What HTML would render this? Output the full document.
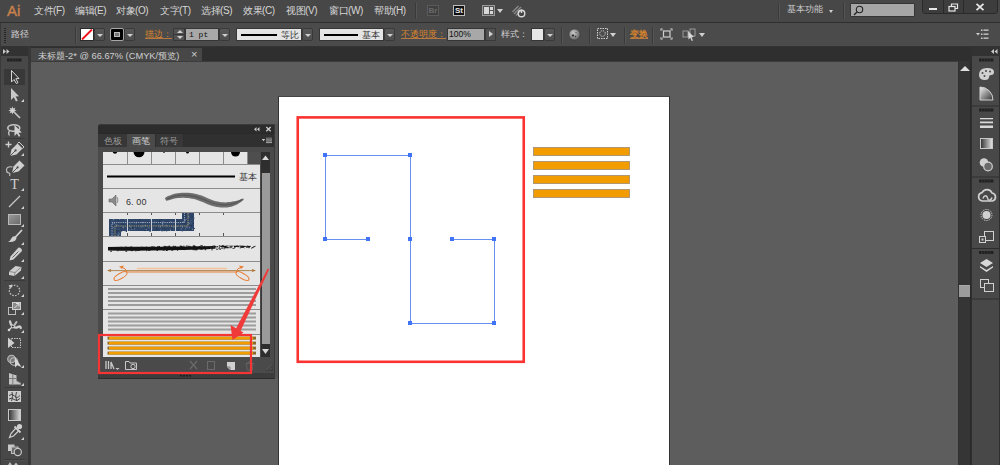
<!DOCTYPE html>
<html><head><meta charset="utf-8">
<style>
*{margin:0;padding:0;box-sizing:border-box}
html,body{width:1000px;height:465px;overflow:hidden;background:#5d5d5d;font-family:"Liberation Sans",sans-serif;}
.a{position:absolute}
#menubar{left:0;top:0;width:1000px;height:22px;background:#474747}
#menuline{left:0;top:22px;width:1000px;height:1px;background:#2e2e2e}
#ctrl{left:0;top:23px;width:1000px;height:23px;background:#4b4b4b}
#ctrlline{left:0;top:46px;width:1000px;height:1px;background:#333}
.mi{position:absolute;top:4px;font-size:10px;letter-spacing:-0.45px;color:#d6d6d6;white-space:nowrap;line-height:14px}
#tbhead{left:1px;top:47px;width:28px;height:9px;background:#323232}
#toolbar{left:1px;top:56px;width:28px;height:409px;background:#484848}
#tbstrip{left:28px;top:47px;width:3px;height:418px;background:#383838}
#tabbar{left:31px;top:47px;width:940px;height:14px;background:#2f2f2f}
#tab{left:31px;top:48px;width:171px;height:13px;background:#474747}
#canvas{left:31px;top:61px;width:927px;height:404px;background:#5d5d5d}
#vscroll{left:958px;top:61px;width:14px;height:404px;background:#353535;border-left:1px solid #303030;border-right:2px solid #2a2a2a}
#dockhead{left:971px;top:47px;width:29px;height:9px;background:#323232}
#dock{left:972px;top:56px;width:28px;height:409px;background:#484848;border-right:1px solid #2e2e2e}
#artboard{left:278px;top:96px;width:392px;height:380px;background:#fff;border:1px solid #333;border-top-color:#444}

.sep{position:absolute;width:1px;background:#3a3a3a;box-shadow:1px 0 0 #555}
.dd{position:absolute;width:11px;height:13px;background:linear-gradient(#585858,#4e4e4e);border:1px solid #393939;border-radius:2px}
.dd:after{content:"";position:absolute;left:2px;top:5px;border-left:3px solid transparent;border-right:3px solid transparent;border-top:3px solid #cfcfcf}
.lbl{position:absolute;font-size:9px;line-height:12px;white-space:nowrap}
.org{color:#d9852c;text-decoration:underline;text-decoration-color:#b87a40;text-underline-offset:1px}
</style></head><body>
<div class="a" id="menubar"></div>
<div class="a" id="menuline"></div>
<div class="a" id="ctrl"></div><div class="a" style="left:0;top:23px;width:1px;height:442px;background:#3a3a3a"></div>
<div class="a" id="ctrlline"></div>
<div class="a" id="tbhead"></div>
<div class="a" id="toolbar"></div>
<div class="a" id="tbstrip"></div>
<div class="a" id="tabbar"></div>
<div class="a" id="tab"></div>
<div class="a" id="canvas"></div><div class="a" style="left:31px;top:61px;width:927px;height:1px;background:#3c3c3c"></div>
<div class="a" id="vscroll"></div>
<div class="a" id="dockhead"></div>
<div class="a" id="dock"></div>
<div class="a" id="artboard"></div>

<!-- MENU BAR -->
<div class="a" style="left:7px;top:2px;font-size:15px;font-weight:normal;color:#c8804d;-webkit-text-stroke:0.4px #c8804d;line-height:18px;letter-spacing:0px">Ai</div>
<div class="mi" style="left:34px">文件(F)</div>
<div class="mi" style="left:75px">编辑(E)</div>
<div class="mi" style="left:116px">对象(O)</div>
<div class="mi" style="left:160px">文字(T)</div>
<div class="mi" style="left:201px">选择(S)</div>
<div class="mi" style="left:243px">效果(C)</div>
<div class="mi" style="left:286px">视图(V)</div>
<div class="mi" style="left:329px">窗口(W)</div>
<div class="mi" style="left:374px">帮助(H)</div>

<!-- MENU RIGHT -->
<div class="sep" style="left:415px;top:3px;height:16px"></div>
<div class="a" style="left:427px;top:5px;width:12px;height:11px;border:1px solid #5a5a5a;background:#404040;color:#6a6a6a;font-size:8px;line-height:9px;text-align:center;font-weight:bold">Br</div>
<div class="a" style="left:453px;top:5px;width:12px;height:11px;border:1px solid #bdbdbd;background:#111;color:#e8e8e8;font-size:8px;line-height:9px;text-align:center;font-weight:bold">St</div>
<div class="a" style="left:482px;top:5px;width:13px;height:11px;border:1px solid #9a9a9a;background:#555"><div class="a" style="left:1px;top:1px;width:5px;height:7px;background:#d8d8d8"></div><div class="a" style="left:7px;top:1px;width:3px;height:3px;background:#d8d8d8"></div><div class="a" style="left:7px;top:5px;width:3px;height:3px;background:#d8d8d8"></div></div>
<div class="a" style="left:497px;top:9px;border-left:3px solid transparent;border-right:3px solid transparent;border-top:4px solid #d0d0d0"></div>
<svg class="a" style="left:511px;top:4px" width="16" height="14" viewBox="0 0 16 14"><path d="M1.5 8 L7.5 2 M3 10 L10 3 M5 11.5 L10.5 6" stroke="#8a8a8a" stroke-width="1.4"/><circle cx="10.5" cy="9.5" r="3.3" fill="none" stroke="#d8d8d8" stroke-width="1.4"/><path d="M10.5 5.5 V9" stroke="#d8d8d8" stroke-width="1.4"/></svg>
<div class="sep" style="left:778px;top:3px;height:16px"></div>
<div class="lbl" style="left:787px;top:3px;color:#cfcfcf">基本功能</div>
<div class="a" style="left:829px;top:10px;border-left:2px solid transparent;border-right:2px solid transparent;border-top:3px solid #cfcfcf"></div>
<div class="sep" style="left:843px;top:3px;height:16px"></div>
<div class="a" style="left:850px;top:3px;width:65px;height:14px;background:#a6a6a6;border:1px solid #353535;border-radius:1px"></div>
<svg class="a" style="left:853px;top:5px" width="11" height="11" viewBox="0 0 11 11"><circle cx="6.5" cy="4.5" r="3.2" fill="none" stroke="#222" stroke-width="1.1"/><path d="M4.2 6.8 L1 10" stroke="#222" stroke-width="1.3"/></svg>
<div class="a" style="left:922px;top:-2px;width:76px;height:16px;background:#3d3d3d;border:1px solid #2a2a2a;border-radius:0 0 3px 3px;box-shadow:inset 0 1px 0 #4a4a4a"></div>
<div class="a" style="left:943px;top:0;width:1px;height:13px;background:#2a2a2a"></div>
<div class="a" style="left:963px;top:0;width:1px;height:13px;background:#2a2a2a"></div>
<div class="a" style="left:929px;top:8px;width:8px;height:2px;background:#e6e6e6"></div>
<svg class="a" style="left:948px;top:3px" width="11" height="9" viewBox="0 0 11 9"><rect x="1" y="3.5" width="6" height="4.5" fill="none" stroke="#e6e6e6" stroke-width="1.2"/><path d="M3.5 3.5 V1 H9.5 V5.5 H7" fill="none" stroke="#e6e6e6" stroke-width="1.2"/></svg>
<svg class="a" style="left:975px;top:3px" width="10" height="8" viewBox="0 0 10 8"><path d="M1.5 0.8 L8.5 7.2 M8.5 0.8 L1.5 7.2" stroke="#e6e6e6" stroke-width="1.8"/></svg>

<!-- CONTROL BAR -->
<div class="a" style="left:4px;top:28px;width:2px;height:15px;background:repeating-linear-gradient(#262626 0 1px,transparent 1px 2px)"></div>
<div class="lbl" style="left:11px;top:28px;color:#d6d6d6;font-size:9px;line-height:12px">路径</div>
<div class="sep" style="left:75px;top:27px;height:17px"></div>
<div class="a" style="left:80px;top:28px;width:14px;height:13px;background:#fff;border:1px solid #2a2a2a;overflow:hidden"><svg width="12" height="11" style="position:absolute;left:0;top:0"><path d="M1 10.5 L11 0.5" stroke="#f0101a" stroke-width="1.9"/></svg></div>
<div class="dd" style="left:94px;top:28px"></div>
<div class="a" style="left:110px;top:28px;width:14px;height:13px;background:#000;border:1px solid #a8a8a8;border-radius:2px"><div class="a" style="left:3px;top:3px;width:6px;height:5px;border:1px solid #bbb;background:#777"></div></div>
<div class="dd" style="left:124px;top:28px"></div>
<div class="lbl org" style="left:145px;top:28px">描边：</div>
<div class="a" style="left:173px;top:28px;width:12px;height:13px;background:#525252;border:1px solid #393939"><div class="a" style="left:3px;top:1px;border-left:3px solid transparent;border-right:3px solid transparent;border-bottom:3px solid #cfcfcf"></div><div class="a" style="left:0;top:5px;width:10px;height:1px;background:#363636"></div><div class="a" style="left:3px;top:7px;border-left:3px solid transparent;border-right:3px solid transparent;border-top:3px solid #cfcfcf"></div></div>
<div class="a" style="left:185px;top:28px;width:34px;height:13px;background:#a8a8a8;border:1px solid #363636;color:#111;font-family:'Liberation Mono',monospace;font-size:8px;line-height:11px;padding-left:3px;white-space:pre">1 pt</div>
<div class="dd" style="left:219px;top:28px"></div>
<div class="a" style="left:236px;top:28px;width:66px;height:13px;background:#e4e4e4;border:1px solid #363636"><div class="a" style="left:4px;top:5px;width:36px;height:2px;background:#000"></div><div class="lbl" style="left:44px;top:0px;color:#333">等比</div></div>
<div class="dd" style="left:302px;top:28px"></div>
<div class="a" style="left:319px;top:28px;width:65px;height:13px;background:#e4e4e4;border:1px solid #363636"><div class="a" style="left:4px;top:5px;width:34px;height:2px;background:#000"></div><div class="lbl" style="left:42px;top:0px;color:#333">基本</div></div>
<div class="dd" style="left:384px;top:28px"></div>
<div class="lbl org" style="left:401px;top:28px">不透明度：</div>
<div class="a" style="left:447px;top:28px;width:38px;height:13px;background:#a8a8a8;border:1px solid #363636;color:#111;font-size:8.5px;line-height:11px;padding-left:1px">100%</div>
<div class="a" style="left:485px;top:28px;width:11px;height:13px;background:#525252;border:1px solid #393939"><div class="a" style="left:3px;top:2px;border-top:3px solid transparent;border-bottom:3px solid transparent;border-left:4px solid #cfcfcf"></div></div>
<div class="lbl" style="left:501px;top:28px;color:#cfcfcf">样式：</div>
<div class="a" style="left:531px;top:28px;width:13px;height:13px;background:#e6e6e6;border:1px solid #363636"></div>
<div class="dd" style="left:544px;top:28px"></div>
<div class="sep" style="left:561px;top:27px;height:17px"></div>
<svg class="a" style="left:568px;top:28px" width="13" height="13" viewBox="0 0 13 13"><defs><radialGradient id="gg" cx="0.4" cy="0.35" r="0.75"><stop offset="0" stop-color="#c8c8c8"/><stop offset="1" stop-color="#5a5a5a"/></radialGradient></defs><circle cx="6.5" cy="6.5" r="5.5" fill="url(#gg)" stroke="#3a3a3a" stroke-width="0.6"/><circle cx="5" cy="7.5" r="1.1" fill="#222"/><circle cx="7.5" cy="8.5" r="0.7" fill="#333"/><circle cx="8" cy="4.5" r="0.6" fill="#444"/></svg>
<div class="sep" style="left:589px;top:27px;height:17px"></div>
<svg class="a" style="left:597px;top:28px" width="12" height="12" viewBox="0 0 12 12"><rect x="0.5" y="0.5" width="10" height="10" fill="none" stroke="#d0d0d0" stroke-dasharray="1.5 1"/><circle cx="5.5" cy="5.5" r="2.8" fill="none" stroke="#d0d0d0" stroke-dasharray="1.2 1"/></svg>
<div class="a" style="left:610px;top:33px;border-left:3px solid transparent;border-right:3px solid transparent;border-top:4px solid #d0d0d0"></div>
<div class="sep" style="left:624px;top:27px;height:17px"></div>
<div class="lbl org" style="left:630px;top:28px;-webkit-text-stroke:0.3px #d9852c">变换</div>
<div class="sep" style="left:652px;top:27px;height:17px"></div>
<svg class="a" style="left:660px;top:28px" width="13" height="12" viewBox="0 0 13 12"><rect x="3.5" y="3" width="6.5" height="6" fill="#4b4b4b" stroke="#d0d0d0" stroke-width="1.2"/><path d="M0.5 0.5 h2.2 v0.9 h-1.3 v1.3 h-0.9 Z M12.5 0.5 h-2.2 v0.9 h1.3 v1.3 h0.9 Z M0.5 11.5 h2.2 v-0.9 h-1.3 v-1.3 h-0.9 Z M12.5 11.5 h-2.2 v-0.9 h1.3 v-1.3 h0.9 Z" fill="#d8d8d8"/><path d="M1.5 1.5 L3.5 3 M11.5 1.5 L10 3 M1.5 10.5 L3.5 9 M11.5 10.5 L10 9" stroke="#999" stroke-width="0.8"/></svg>
<svg class="a" style="left:682px;top:28px" width="15" height="13" viewBox="0 0 15 13"><rect x="1" y="3" width="5" height="6" fill="none" stroke="#9a9a9a" stroke-width="1"/><rect x="8" y="1" width="5" height="7" fill="none" stroke="#9a9a9a" stroke-width="1"/><path d="M6 3 L12 9 L9.5 9.2 L11 12.5 L9.8 13 L8.3 9.8 L6.5 11.5 Z" fill="#d8d8d8"/></svg>
<div class="a" style="left:699px;top:33px;border-left:3px solid transparent;border-right:3px solid transparent;border-top:4px solid #d0d0d0"></div>
<svg class="a" style="left:976px;top:29px" width="13" height="11" viewBox="0 0 13 11"><path d="M0 4 L4 4 L2 6.5 Z" fill="#d0d0d0"/><rect x="5" y="0.5" width="1.5" height="1.5" fill="#d0d0d0"/><rect x="5" y="4.5" width="1.5" height="1.5" fill="#d0d0d0"/><rect x="5" y="8.5" width="1.5" height="1.5" fill="#d0d0d0"/><rect x="7.5" y="0.5" width="5" height="1.3" fill="#d0d0d0"/><rect x="7.5" y="4.5" width="5" height="1.3" fill="#d0d0d0"/><rect x="7.5" y="8.5" width="5" height="1.3" fill="#d0d0d0"/></svg>

<!-- TAB -->
<div class="lbl" style="left:38px;top:48px;color:#cfcfcf;font-size:9.3px;line-height:13px;padding-top:2px">未标题-2* @ 66.67% (CMYK/预览)</div>
<div class="a" style="left:191px;top:49px;color:#cfcfcf;font-size:11px;line-height:11px">×</div>

<!-- TOOLBAR -->
<svg class="a" style="left:0;top:0" width="31" height="465" viewBox="0 0 31 465">
<path d="M3 49 L6 51.5 L3 54 Z M6.5 49 L9.5 51.5 L6.5 54 Z" fill="#c8c8c8"/>
<rect x="7" y="58.5" width="14.5" height="3" fill="#222"/><g fill="#3a3a3a"><rect x="9.5" y="58.5" width="0.6" height="3"/><rect x="12.2" y="58.5" width="0.6" height="3"/><rect x="14.9" y="58.5" width="0.6" height="3"/><rect x="17.6" y="58.5" width="0.6" height="3"/></g>
<rect x="4" y="69" width="21" height="16" fill="#383838"/>
<path d="M11.5 70.5 L11.5 82 L14 79.5 L16.3 83.5 L18 82.6 L15.8 78.7 L19 78.5 Z" fill="none" stroke="#d6d6d6" stroke-width="1"/>
<path d="M11 88 L11 100 L13.8 97.3 L16 101.5 L17.8 100.6 L15.6 96.4 L19 96.2 Z" fill="#c8c8c8"/>
<path d="M21 102 L24 102 L24 99 Z" fill="#d0d0d0"/>
<path d="M12.50 106.20 L13.23 108.74 L15.54 107.46 L14.26 109.77 L16.80 110.50 L14.26 111.23 L15.54 113.54 L13.23 112.26 L12.50 114.80 L11.77 112.26 L9.46 113.54 L10.74 111.23 L8.20 110.50 L10.74 109.77 L9.46 107.46 L11.77 108.74 Z" fill="#cfcfcf"/><circle cx="12.5" cy="110.5" r="2.3" fill="#cfcfcf"/>
<path d="M14.5 112.5 L20 118" stroke="#c4c4c4" stroke-width="1.7"/>
<ellipse cx="13.8" cy="128" rx="6" ry="3.3" fill="none" stroke="#c4c4c4" stroke-width="1.6"/>
<path d="M10 130.5 q-2.5 2 -0.5 5" fill="none" stroke="#c4c4c4" stroke-width="1.3"/>
<path d="M14.5 125 L14.5 136 L17 133.5 L18.8 136.8 L20.3 136 L18.6 132.8 L21.8 132.5 Z" fill="#d2d2d2"/>
<rect x="4" y="138" width="21" height="1" fill="#3a3a3a"/>
<path d="M8.5 141.5 V147.5 M5.5 144.5 H11.5" stroke="#d0d0d0" stroke-width="1.3"/>
<path d="M10 156 L11.5 149.5 L17.5 143.5 L22.5 148.5 L16.5 154.5 Z" fill="#cfcfcf"/>
<path d="M17.5 143.5 L19 142 L24 147 L22.5 148.5" fill="none" stroke="#cfcfcf" stroke-width="1"/>
<path d="M10 156 L15 151" stroke="#484848" stroke-width="0.9"/>
<circle cx="15.6" cy="150.4" r="1.1" fill="#484848"/>
<path d="M21 156 L24 156 L24 153 Z" fill="#d0d0d0"/>
<path d="M12 173 L13.5 166.5 L19.5 160.5 L24.5 165.5 L18.5 171.5 Z" fill="#cfcfcf"/>
<path d="M12 173 L17 168" stroke="#484848" stroke-width="0.9"/>
<circle cx="17.6" cy="167.4" r="1.1" fill="#484848"/>
<path d="M12.5 167 q-6 -1 -6 3 q0 3 2.5 3 q1.5 0 0.5 3" fill="none" stroke="#c4c4c4" stroke-width="1.1"/>
<text x="14.5" y="188.5" font-family="Liberation Serif" font-size="14" fill="#d0d0d0" text-anchor="middle">T</text>
<path d="M21 191 L24 191 L24 188 Z" fill="#d0d0d0"/>
<path d="M9 207 L20 196" stroke="#c8c8c8" stroke-width="1.2"/>
<path d="M21 209 L24 209 L24 206 Z" fill="#d0d0d0"/>
<defs><linearGradient id="rg" x1="0" y1="0" x2="1" y2="1"><stop offset="0" stop-color="#9a9a9a"/><stop offset="1" stop-color="#6a6a6a"/></linearGradient>
<linearGradient id="gr2" x1="0" y1="0" x2="1" y2="0"><stop offset="0" stop-color="#303030"/><stop offset="1" stop-color="#dcdcdc"/></linearGradient></defs>
<rect x="8.5" y="214.5" width="12" height="10" fill="url(#rg)" stroke="#b8b8b8" stroke-width="1"/>
<path d="M21 227 L24 227 L24 224 Z" fill="#d0d0d0"/>
<path d="M21.5 230.5 L15.5 237" stroke="#cfcfcf" stroke-width="1.8" stroke-linecap="round"/>
<path d="M15.8 236.5 q1.5 1.5 -0.5 4 q-2.5 2 -7.5 1.5 q2.5 -1 3.5 -3.5 q1.5 -3 4.5 -2 Z" fill="#cfcfcf"/>
<path d="M21 245 L24 245 L24 242 Z" fill="#d0d0d0"/>
<path d="M18.5 247.5 q3.5 0 3.5 3.5 L13.5 259.5 L9.5 260.5 L10.5 256.5 Z" fill="#cfcfcf"/>
<path d="M18.5 251.5 L12.5 257.5" stroke="#6a6a6a" stroke-width="1"/>
<path d="M21 262 L24 262 L24 259 Z" fill="#d0d0d0"/>
<path d="M9 271.5 L15.5 266 L21.5 267 L21 270.5 L14.5 276 L9 275 Z" fill="#cfcfcf"/>
<path d="M9 271.5 L15 272.5 L21.5 267" fill="none" stroke="#777" stroke-width="0.8"/>
<path d="M15 272.5 L14.5 276" stroke="#777" stroke-width="0.8"/>
<path d="M21 279 L24 279 L24 276 Z" fill="#d0d0d0"/>
<rect x="4" y="280" width="21" height="1" fill="#3a3a3a"/>
<circle cx="14.5" cy="290.5" r="5.2" fill="none" stroke="#bdbdbd" stroke-width="1.3" stroke-dasharray="1.6 1.3"/>
<path d="M8.5 285.5 L12.5 284.5 L11 288.5 Z" fill="#d0d0d0"/>
<path d="M21 297 L24 297 L24 294 Z" fill="#d0d0d0"/>
<rect x="8.5" y="307.5" width="7" height="7" fill="none" stroke="#bdbdbd" stroke-width="1"/>
<rect x="12.5" y="302.5" width="8" height="7" fill="#8a8a8a" stroke="#cfcfcf" stroke-width="1"/>
<path d="M14.5 308 L19 303.5 M16 303.5 H19 V306.5" fill="none" stroke="#e0e0e0" stroke-width="1"/>
<path d="M21 315 L24 315 L24 312 Z" fill="#d0d0d0"/>
<path d="M10 321.5 q0.5 3.5 3 5 q3 2 5.5 0.2 q1.5 -1 2.3 1.3" fill="none" stroke="#cfcfcf" stroke-width="2.3" stroke-linecap="round"/>
<path d="M16.5 322 L14.5 325" stroke="#bdbdbd" stroke-width="2" stroke-linecap="round"/>
<path d="M9 330 L12 327" stroke="#cfcfcf" stroke-width="1.3"/>
<circle cx="9" cy="330" r="1.3" fill="#d8d8d8"/>
<circle cx="12.8" cy="326.5" r="1.4" fill="#333" stroke="#e0e0e0" stroke-width="0.9"/>
<path d="M21 333 L24 333 L24 330 Z" fill="#d0d0d0"/>
<rect x="11.5" y="338.5" width="9" height="9" fill="none" stroke="#c8c8c8" stroke-dasharray="1.5 1"/>
<path d="M8 337.5 L8 348 L14.5 343 Z" fill="#cfcfcf"/>
<circle cx="11.5" cy="359" r="3.8" fill="#7a7a7a" stroke="#bdbdbd" stroke-width="1.1"/>
<circle cx="14" cy="361.5" r="3.8" fill="none" stroke="#bdbdbd" stroke-width="1.1"/>
<path d="M15 357 L15 367.5 L17.3 365.3 L21.5 367 Z" fill="#d8d8d8"/>
<path d="M21 368 L24 368 L24 365 Z" fill="#d0d0d0"/>
<path d="M9 372.5 L16.5 374.8 L16.5 380.5 L21 383 L21 384.5 L9 384.5 Z" fill="#c4c4c4"/>
<path d="M9 372.5 L16.5 374.8" stroke="#2a2a2a" stroke-width="0.8"/>
<path d="M12.8 373.5 V384 M9 378.5 H16.5" stroke="#6a6a6a" stroke-width="0.8"/>
<path d="M16.5 381 L21 383.5" stroke="#6a6a6a" stroke-width="0.6"/>
<path d="M21 386 L24 386 L24 383 Z" fill="#d0d0d0"/>
<rect x="4" y="387" width="21" height="1" fill="#3a3a3a"/>
<rect x="8.5" y="391.5" width="12" height="10" fill="#c8c8c8" stroke="#d0d0d0"/>
<path d="M9 395.5 q3 -2.5 5.5 0.5 q2.5 3 5.5 -0.5 M9 399 q3 -2 5 0.5 q3 2.5 6 -1 M12 392 q1.5 4 -0.5 9 M16.5 392 q-2 4 0.5 9" fill="none" stroke="#3a3a3a" stroke-width="0.9"/>
<rect x="8.5" y="409.5" width="12" height="11" fill="url(#gr2)" stroke="#c8c8c8"/>
<path d="M16 428 L11 433.5 L9.5 437.5 L13.5 436 L19 430.5" fill="none" stroke="#cfcfcf" stroke-width="1.2"/>
<path d="M14.5 426.5 L20.5 432.5" stroke="#cfcfcf" stroke-width="1.8"/>
<circle cx="19.5" cy="426.5" r="2.6" fill="#cfcfcf"/>
<path d="M21 440 L24 440 L24 437 Z" fill="#d0d0d0"/>
<rect x="8" y="444.5" width="6.5" height="6.5" fill="#c8c8c8"/>
<rect x="11.5" y="447" width="6.5" height="6.5" fill="#6a6a6a" stroke="#bdbdbd" stroke-width="1"/>
<circle cx="17.8" cy="452" r="3.6" fill="#4a4a4a" stroke="#c4c4c4" stroke-width="1.2"/>
<rect x="4" y="459" width="21" height="1" fill="#3a3a3a"/><rect x="4" y="460" width="21" height="1" fill="#525252"/>
<path d="M8 465 L10 462 L12 465 Z M14 465 L16 462.5 L18 465 Z" fill="#bbbbbb"/>
</svg>

<!-- SCROLLBAR -->
<div class="a" style="left:965px;top:66px;border-left:5px solid transparent;border-right:5px solid transparent;border-bottom:5px solid #e0e0e0;left:960px"></div>
<div class="a" style="left:959px;top:285px;width:11px;height:12px;background:#9c9c9c;border-top:1px solid #a8a8a8"></div>

<!-- DOCK -->
<div class="a" style="left:971px;top:56px;width:1px;height:409px;background:#2e2e2e"></div>
<svg class="a" style="left:971px;top:47px" width="29" height="418" viewBox="971 47 29 418">
<path d="M994 49 L991 51.5 L994 54 Z M997.5 49 L994.5 51.5 L997.5 54 Z" fill="#c8c8c8"/>
<rect x="979" y="58.5" width="14.5" height="3" fill="#222"/><g fill="#3a3a3a"><rect x="981.5" y="58.5" width="0.6" height="3"/><rect x="984.2" y="58.5" width="0.6" height="3"/><rect x="986.9" y="58.5" width="0.6" height="3"/><rect x="989.6" y="58.5" width="0.6" height="3"/></g>
<path d="M979 75 q0 -7 8 -7 q7 0 7 4 q0 3 -3 3 q-2 0 -2 2 q0 3 -4 3 q-6 0 -6 -5 Z" fill="#d0d0d0"/>
<circle cx="982.5" cy="73" r="1" fill="#4b4b4b"/><circle cx="986" cy="71" r="1" fill="#4b4b4b"/><circle cx="990" cy="71.5" r="1" fill="#4b4b4b"/><circle cx="984.5" cy="76" r="1" fill="#4b4b4b"/>
<defs><linearGradient id="cg" x1="0" y1="0" x2="1" y2="1"><stop offset="0" stop-color="#f0f0f0"/><stop offset="1" stop-color="#303030"/></linearGradient></defs>
<path d="M980 87 A13 13 0 0 1 993 100 L980 100 Z" fill="url(#cg)" stroke="#d0d0d0" stroke-width="1"/>
<rect x="972" y="105.5" width="28" height="1" fill="#2e2e2e"/>
<rect x="979" y="108.5" width="14.5" height="3" fill="#222"/><g fill="#3a3a3a"><rect x="981.5" y="108.5" width="0.6" height="3"/><rect x="984.2" y="108.5" width="0.6" height="3"/><rect x="986.9" y="108.5" width="0.6" height="3"/><rect x="989.6" y="108.5" width="0.6" height="3"/></g>
<rect x="980" y="118" width="13" height="1.3" fill="#d8d8d8"/><rect x="980" y="121.5" width="13" height="1.8" fill="#d8d8d8"/><rect x="980" y="125.5" width="13" height="2.5" fill="#d8d8d8"/>
<defs><linearGradient id="dg" x1="0" y1="0" x2="1" y2="0"><stop offset="0" stop-color="#303030"/><stop offset="1" stop-color="#e8e8e8"/></linearGradient></defs>
<rect x="980.5" y="138.5" width="12" height="10" fill="url(#dg)" stroke="#c8c8c8"/>
<circle cx="984" cy="162.5" r="4.3" fill="#d0d0d0"/>
<circle cx="988" cy="166.5" r="4.3" fill="#6a6a6a" stroke="#d0d0d0" stroke-width="1.2"/>
<rect x="972" y="176.5" width="28" height="1" fill="#2e2e2e"/>
<rect x="979" y="179.5" width="14.5" height="3" fill="#222"/><g fill="#3a3a3a"><rect x="981.5" y="179.5" width="0.6" height="3"/><rect x="984.2" y="179.5" width="0.6" height="3"/><rect x="986.9" y="179.5" width="0.6" height="3"/><rect x="989.6" y="179.5" width="0.6" height="3"/></g>
<path d="M982.5 201 a4.2 4.2 0 0 1 -0.5 -8.3 a5.5 5.5 0 0 1 10 0.3 a4.1 4.1 0 0 1 0.5 8 Z" fill="none" stroke="#d0d0d0" stroke-width="1.7"/>
<path d="M983 198.5 c1 -3.5 4 -3.5 4.5 -0.5 c0.5 3 3.5 3 4.5 -0.5" fill="none" stroke="#d0d0d0" stroke-width="1.5"/>
<circle cx="986.5" cy="215" r="5.5" fill="none" stroke="#c8c8c8" stroke-dasharray="1.4 1"/>
<circle cx="986.5" cy="215" r="4" fill="#d0d0d0"/>
<rect x="984.5" y="231.5" width="9" height="9" fill="none" stroke="#d0d0d0"/>
<rect x="979.5" y="236.5" width="6" height="6" fill="#4b4b4b" stroke="#d0d0d0"/>
<rect x="981.5" y="238.5" width="2" height="2" fill="#d0d0d0"/>
<rect x="972" y="248" width="28" height="1" fill="#2e2e2e"/>
<rect x="979" y="251.0" width="14.5" height="3" fill="#222"/><g fill="#3a3a3a"><rect x="981.5" y="251.0" width="0.6" height="3"/><rect x="984.2" y="251.0" width="0.6" height="3"/><rect x="986.9" y="251.0" width="0.6" height="3"/><rect x="989.6" y="251.0" width="0.6" height="3"/></g>
<path d="M986.5 259 L993 263 L986.5 267 L980 263 Z" fill="#d8d8d8"/>
<path d="M980 266 L986.5 270 L993 266 L993 267.5 L986.5 272 L980 267.5 Z" fill="#d8d8d8"/>
<rect x="980.5" y="279.5" width="8" height="8" fill="none" stroke="#d0d0d0"/>
<rect x="984.5" y="283.5" width="9" height="8" fill="#4b4b4b" stroke="#d0d0d0"/>
<rect x="972" y="298.5" width="28" height="1" fill="#2e2e2e"/>
</svg>

<!-- ARTWORK -->
<svg class="a" style="left:0;top:0" width="1000" height="465" viewBox="0 0 1000 465">
<rect x="297.75" y="117.4" width="226" height="244.4" fill="none" stroke="#fb3232" stroke-width="2.6"/>
<path d="M368 239.5 H325.5 V155.5 H410.5 V323.5 H494.5 V239.5 H452" fill="none" stroke="#6890f0" stroke-width="1"/>
<rect x="323" y="153" width="4" height="4" fill="#4173f7"/><rect x="408" y="153" width="4" height="4" fill="#4173f7"/><rect x="323" y="237" width="4" height="4" fill="#4173f7"/><rect x="366" y="237" width="4" height="4" fill="#4173f7"/><rect x="408" y="237" width="4" height="4" fill="#4173f7"/><rect x="450" y="237" width="4" height="4" fill="#4173f7"/><rect x="492" y="237" width="4" height="4" fill="#4173f7"/><rect x="408" y="321" width="4" height="4" fill="#4173f7"/><rect x="492" y="321" width="4" height="4" fill="#4173f7"/>
<rect x="533.5" y="147.5" width="96" height="8" fill="#f39c00" stroke="#a89274" stroke-width="0.9"/><rect x="533.5" y="161.5" width="96" height="8" fill="#f39c00" stroke="#a89274" stroke-width="0.9"/><rect x="533.5" y="175.5" width="96" height="8" fill="#f39c00" stroke="#a89274" stroke-width="0.9"/><rect x="533.5" y="189.5" width="96" height="8" fill="#f39c00" stroke="#a89274" stroke-width="0.9"/>
</svg>

<!-- BRUSH PANEL -->
<div class="a" style="left:98px;top:124px;width:177px;height:254px;background:#4a4a4a;border-radius:3px 3px 0 0"></div>
<div class="a" style="left:98px;top:124px;width:177px;height:10px;background:#2c2c2c;border-radius:3px 3px 0 0;border-top:1px solid #3a3a3a"></div>
<div class="a" style="left:98px;top:134px;width:177px;height:13px;background:#303030"></div><div class="a" style="left:98px;top:133px;width:177px;height:1px;background:#292929"></div>
<div class="a" style="left:98px;top:134px;width:29px;height:13px;background:#373737"></div>
<div class="a" style="left:127px;top:134px;width:28px;height:13px;background:#4a4a4a"></div>
<div class="a" style="left:155px;top:134px;width:29px;height:13px;background:#373737;border-left:1px solid #2e2e2e;border-right:1px solid #2e2e2e"></div>
<div class="lbl" style="left:104px;top:135px;color:#9a9a9a">色板</div>
<div class="lbl" style="left:132px;top:135px;color:#d8d8d8">画笔</div>
<div class="lbl" style="left:160px;top:135px;color:#9a9a9a">符号</div>
<div class="a" style="left:98px;top:147px;width:177px;height:226px;background:#4a4a4a"></div><div class="a" style="left:274px;top:124px;width:1px;height:254px;background:#383838"></div><div class="a" style="left:275px;top:124px;width:3px;height:254px;background:#555"></div>
<div class="a" style="left:103px;top:152px;width:157px;height:205px;background:#e5e5e5"></div>
<div class="a" style="left:261px;top:152px;width:9px;height:205px;background:#383838"></div>
<div class="a" style="left:262px;top:173px;width:8px;height:171px;background:#9a9a9a"></div>
<div class="a" style="left:98px;top:373px;width:177px;height:6px;background:#3c3c3c;border-bottom:1px solid #2c2c2c"></div>
<svg class="a" style="left:0;top:0" width="300" height="400" viewBox="0 0 300 400">
<path d="M256.5 127 L254 129.2 L256.5 131.4 Z M259.5 127 L257 129.2 L259.5 131.4 Z" fill="#c8c8c8"/>
<path d="M266.3 127 L270.7 131.3 M270.7 127 L266.3 131.3" stroke="#d0d0d0" stroke-width="1.2"/>
<path d="M261.8 139 L265.2 139 L263.5 141.3 Z" fill="#d0d0d0"/>
<rect x="266" y="137.5" width="6" height="5.5" fill="#6a6a6a"/><rect x="266" y="139.6" width="6" height="0.9" fill="#888"/><rect x="266" y="142.2" width="6" height="0.9" fill="#aaa"/>
<rect x="248" y="152" width="12" height="12" fill="#4e4e4e"/>
<rect x="127" y="152" width="1" height="12" fill="#8c8c8c"/><rect x="151" y="152" width="1" height="12" fill="#8c8c8c"/><rect x="175" y="152" width="1" height="12" fill="#8c8c8c"/><rect x="199" y="152" width="1" height="12" fill="#8c8c8c"/><rect x="223" y="152" width="1" height="12" fill="#8c8c8c"/><rect x="247" y="152" width="1" height="12" fill="#8c8c8c"/>
<g clip-path="url(#c1)"><circle cx="115" cy="151.5" r="2.3" fill="#000"/>
<circle cx="139" cy="151.8" r="5.5" fill="#000"/>
<circle cx="164" cy="152" r="1" fill="#333"/>
<circle cx="235.5" cy="152" r="4.5" fill="#000"/><circle cx="187.5" cy="152" r="1.5" fill="#000"/></g><defs><clipPath id="c1"><rect x="103" y="152" width="157" height="12"/></clipPath></defs>
<rect x="103" y="164" width="157" height="1" fill="#8c8c8c"/><rect x="103" y="188" width="157" height="1" fill="#8c8c8c"/><rect x="103" y="212" width="157" height="1" fill="#8c8c8c"/><rect x="103" y="236" width="157" height="1" fill="#8c8c8c"/><rect x="103" y="261" width="157" height="1" fill="#8c8c8c"/><rect x="103" y="285" width="157" height="1" fill="#8c8c8c"/><rect x="103" y="309" width="157" height="1" fill="#8c8c8c"/><rect x="103" y="334" width="157" height="1" fill="#8c8c8c"/>
<rect x="107" y="175.5" width="128" height="2" fill="#000"/><text x="239" y="180" font-family="Liberation Sans" font-size="9" fill="#333">基本</text>
<path d="M109 199 h3 l4 -4 v11 l-4 -4 h-3 Z" fill="#8a8a8a" stroke="#666" stroke-width="0.6"/>
<path d="M117 197 q2 3 0 6" fill="none" stroke="#777" stroke-width="0.8"/>
<text x="126" y="204.5" font-family="Liberation Sans" font-size="9" fill="#333" letter-spacing="0.1">6. 00</text>
<defs><filter id="bl" x="-10%" y="-50%" width="120%" height="200%"><feGaussianBlur stdDeviation="0.7"/></filter></defs><path d="M166.2 200.8 L167.9 200.4 L169.5 199.9 L171.2 199.4 L172.9 198.9 L174.7 198.6 L176.4 198.3 L178.3 198.1 L180.1 197.9 L182.0 197.8 L183.9 197.8 L185.9 197.9 L187.8 198.1 L189.8 198.3 L191.8 198.7 L193.8 199.1 L195.8 199.6 L197.8 200.2 L199.8 200.9 L201.8 201.7 L203.9 202.6 L203.8 202.5 L205.9 203.5 L208.1 204.5 L210.3 205.3 L212.5 206.0 L214.7 206.5 L216.8 207.0 L218.9 207.3 L221.1 207.5 L223.2 207.6 L225.3 207.5 L227.3 207.4 L229.4 207.1 L231.4 206.7 L233.4 206.1 L235.2 205.3 L237.1 204.4 L238.9 203.3 L240.6 202.2 L242.3 201.0 L243.9 199.6 L243.1 198.4 L241.2 199.1 L239.4 199.9 L237.6 200.5 L235.8 201.0 L234.0 201.3 L232.2 201.6 L230.4 201.9 L228.7 202.1 L226.9 202.3 L225.1 202.4 L223.3 202.3 L221.5 202.2 L219.7 201.9 L217.8 201.6 L216.0 201.2 L214.1 200.7 L212.1 200.0 L210.2 199.3 L208.2 198.4 L206.2 197.5 L206.1 197.4 L204.0 196.5 L201.7 195.6 L199.5 194.9 L197.2 194.3 L195.0 193.7 L192.7 193.3 L190.5 193.0 L188.3 192.8 L186.1 192.7 L183.9 192.7 L181.8 192.8 L179.7 193.0 L177.6 193.2 L175.6 193.6 L173.6 194.1 L171.7 194.7 L169.8 195.4 L168.0 196.1 L166.3 197.0 L164.8 198.2 Z" fill="#6e6e6e" filter="url(#bl)"/><path d="M167 199.3 C176 194, 191 193.5, 205 200 S232 206.5, 242 199.5" fill="none" stroke="#4a4a4a" stroke-width="1.3" opacity="0.6" filter="url(#bl)"/>
<rect x="127" y="213" width="1" height="2" fill="#555"/><rect x="127" y="233" width="1" height="3" fill="#555"/><rect x="151" y="213" width="1" height="2" fill="#555"/><rect x="151" y="233" width="1" height="3" fill="#555"/><rect x="175" y="213" width="1" height="2" fill="#555"/><rect x="175" y="233" width="1" height="3" fill="#555"/><rect x="199" y="213" width="1" height="2" fill="#555"/><rect x="199" y="233" width="1" height="3" fill="#555"/><rect x="223" y="213" width="1" height="2" fill="#555"/><rect x="223" y="233" width="1" height="3" fill="#555"/>
<rect x="109" y="219" width="12" height="17" fill="#2f4668"/>
<rect x="109" y="219" width="85" height="12" fill="#2f4668"/>
<rect x="182" y="213" width="12" height="18" fill="#2f4668"/>
<rect x="129.2" y="225.5" width="1" height="1" fill="#8696ad"/><rect x="186.9" y="223.9" width="1" height="1" fill="#54698a"/><rect x="149.5" y="227.7" width="1" height="1" fill="#1d2f4a"/><rect x="187.7" y="222.0" width="1" height="1" fill="#6a7f9c"/><rect x="173.4" y="226.6" width="1" height="1" fill="#8696ad"/><rect x="131.9" y="226.7" width="1" height="1" fill="#20324f"/><rect x="183.7" y="215.2" width="1" height="1" fill="#1d2f4a"/><rect x="166.1" y="230.9" width="1" height="1" fill="#8696ad"/><rect x="157.8" y="225.3" width="1" height="1" fill="#20324f"/><rect x="185.9" y="226.1" width="1" height="1" fill="#1d2f4a"/><rect x="150.0" y="227.7" width="1" height="1" fill="#20324f"/><rect x="116.5" y="231.4" width="1" height="1" fill="#20324f"/><rect x="185.3" y="213.5" width="1" height="1" fill="#20324f"/><rect x="112.8" y="227.1" width="1" height="1" fill="#6a7f9c"/><rect x="141.1" y="226.5" width="1" height="1" fill="#54698a"/><rect x="125.8" y="222.4" width="1" height="1" fill="#54698a"/><rect x="131.4" y="228.9" width="1" height="1" fill="#8696ad"/><rect x="185.2" y="221.7" width="1" height="1" fill="#20324f"/><rect x="182.9" y="221.9" width="1" height="1" fill="#54698a"/><rect x="132.1" y="227.6" width="1" height="1" fill="#1d2f4a"/><rect x="188.6" y="223.1" width="1" height="1" fill="#8696ad"/><rect x="153.3" y="225.6" width="1" height="1" fill="#6a7f9c"/><rect x="135.8" y="221.7" width="1" height="1" fill="#54698a"/><rect x="162.3" y="223.7" width="1" height="1" fill="#8696ad"/><rect x="160.8" y="219.4" width="1" height="1" fill="#20324f"/><rect x="130.3" y="223.5" width="1" height="1" fill="#54698a"/><rect x="124.7" y="230.4" width="1" height="1" fill="#54698a"/><rect x="117.9" y="231.7" width="1" height="1" fill="#54698a"/><rect x="151.5" y="228.0" width="1" height="1" fill="#8696ad"/><rect x="146.0" y="229.1" width="1" height="1" fill="#6a7f9c"/><rect x="115.8" y="230.1" width="1" height="1" fill="#1d2f4a"/><rect x="184.2" y="223.4" width="1" height="1" fill="#1d2f4a"/><rect x="190.4" y="220.2" width="1" height="1" fill="#54698a"/><rect x="124.6" y="219.4" width="1" height="1" fill="#6a7f9c"/><rect x="177.5" y="220.9" width="1" height="1" fill="#1d2f4a"/><rect x="144.8" y="224.9" width="1" height="1" fill="#8696ad"/><rect x="148.5" y="227.6" width="1" height="1" fill="#8696ad"/><rect x="144.7" y="222.4" width="1" height="1" fill="#20324f"/><rect x="192.9" y="223.0" width="1" height="1" fill="#1d2f4a"/><rect x="111.7" y="223.5" width="1" height="1" fill="#54698a"/><rect x="190.9" y="225.5" width="1" height="1" fill="#1d2f4a"/><rect x="191.5" y="215.8" width="1" height="1" fill="#1d2f4a"/><rect x="112.8" y="233.8" width="1" height="1" fill="#54698a"/><rect x="185.5" y="226.3" width="1" height="1" fill="#6a7f9c"/><rect x="110.7" y="225.4" width="1" height="1" fill="#6a7f9c"/><rect x="188.8" y="227.1" width="1" height="1" fill="#8696ad"/><rect x="119.7" y="235.4" width="1" height="1" fill="#54698a"/><rect x="149.6" y="231.0" width="1" height="1" fill="#8696ad"/><rect x="184.4" y="215.7" width="1" height="1" fill="#1d2f4a"/><rect x="109.6" y="227.5" width="1" height="1" fill="#20324f"/><rect x="113.2" y="219.2" width="1" height="1" fill="#8696ad"/><rect x="161.5" y="225.0" width="1" height="1" fill="#6a7f9c"/><rect x="149.2" y="230.9" width="1" height="1" fill="#6a7f9c"/><rect x="181.8" y="230.8" width="1" height="1" fill="#6a7f9c"/><rect x="116.3" y="224.5" width="1" height="1" fill="#8696ad"/><rect x="141.8" y="222.0" width="1" height="1" fill="#8696ad"/><rect x="156.2" y="229.5" width="1" height="1" fill="#20324f"/><rect x="176.6" y="226.0" width="1" height="1" fill="#6a7f9c"/><rect x="140.7" y="226.9" width="1" height="1" fill="#54698a"/><rect x="161.9" y="222.9" width="1" height="1" fill="#8696ad"/><rect x="162.3" y="230.5" width="1" height="1" fill="#8696ad"/><rect x="144.7" y="229.0" width="1" height="1" fill="#20324f"/><rect x="132.0" y="226.6" width="1" height="1" fill="#20324f"/><rect x="111.4" y="220.5" width="1" height="1" fill="#54698a"/><rect x="176.2" y="219.0" width="1" height="1" fill="#20324f"/><rect x="154.1" y="221.7" width="1" height="1" fill="#6a7f9c"/><rect x="171.4" y="226.0" width="1" height="1" fill="#6a7f9c"/><rect x="178.0" y="229.5" width="1" height="1" fill="#20324f"/><rect x="121.2" y="230.8" width="1" height="1" fill="#6a7f9c"/><rect x="153.8" y="226.0" width="1" height="1" fill="#20324f"/><rect x="180.7" y="228.5" width="1" height="1" fill="#8696ad"/><rect x="112.1" y="230.7" width="1" height="1" fill="#54698a"/><rect x="156.0" y="225.7" width="1" height="1" fill="#54698a"/><rect x="193.9" y="227.9" width="1" height="1" fill="#20324f"/><rect x="161.4" y="230.3" width="1" height="1" fill="#20324f"/><rect x="130.5" y="226.8" width="1" height="1" fill="#8696ad"/><rect x="191.2" y="222.6" width="1" height="1" fill="#54698a"/><rect x="173.3" y="228.5" width="1" height="1" fill="#54698a"/><rect x="122.8" y="224.5" width="1" height="1" fill="#20324f"/><rect x="186.9" y="224.9" width="1" height="1" fill="#20324f"/><rect x="120.6" y="230.3" width="1" height="1" fill="#1d2f4a"/><rect x="158.8" y="220.2" width="1" height="1" fill="#1d2f4a"/><rect x="181.4" y="225.4" width="1" height="1" fill="#8696ad"/><rect x="159.6" y="226.4" width="1" height="1" fill="#8696ad"/><rect x="184.6" y="220.1" width="1" height="1" fill="#8696ad"/><rect x="149.8" y="221.8" width="1" height="1" fill="#1d2f4a"/><rect x="144.6" y="229.0" width="1" height="1" fill="#54698a"/><rect x="126.5" y="226.4" width="1" height="1" fill="#54698a"/><rect x="111.4" y="235.8" width="1" height="1" fill="#6a7f9c"/><rect x="181.8" y="222.2" width="1" height="1" fill="#6a7f9c"/><rect x="129.0" y="229.5" width="1" height="1" fill="#6a7f9c"/><rect x="185.5" y="218.9" width="1" height="1" fill="#6a7f9c"/><rect x="135.6" y="222.7" width="1" height="1" fill="#6a7f9c"/><rect x="119.0" y="219.1" width="1" height="1" fill="#8696ad"/><rect x="112.1" y="223.4" width="1" height="1" fill="#8696ad"/><rect x="109.6" y="220.7" width="1" height="1" fill="#20324f"/><rect x="163.8" y="230.1" width="1" height="1" fill="#20324f"/><rect x="142.2" y="225.5" width="1" height="1" fill="#6a7f9c"/><rect x="184.1" y="214.8" width="1" height="1" fill="#20324f"/><rect x="118.6" y="233.4" width="1" height="1" fill="#8696ad"/><rect x="117.2" y="234.6" width="1" height="1" fill="#8696ad"/><rect x="166.7" y="221.5" width="1" height="1" fill="#20324f"/><rect x="134.1" y="228.5" width="1" height="1" fill="#8696ad"/><rect x="118.1" y="234.7" width="1" height="1" fill="#8696ad"/><rect x="166.2" y="225.3" width="1" height="1" fill="#6a7f9c"/><rect x="165.7" y="224.7" width="1" height="1" fill="#6a7f9c"/><rect x="170.0" y="228.6" width="1" height="1" fill="#54698a"/><rect x="172.1" y="227.9" width="1" height="1" fill="#1d2f4a"/><rect x="188.2" y="216.3" width="1" height="1" fill="#8696ad"/><rect x="163.8" y="227.9" width="1" height="1" fill="#20324f"/><rect x="156.2" y="227.9" width="1" height="1" fill="#20324f"/><rect x="150.0" y="231.0" width="1" height="1" fill="#6a7f9c"/><rect x="156.1" y="226.2" width="1" height="1" fill="#20324f"/><rect x="139.5" y="219.1" width="1" height="1" fill="#20324f"/><rect x="149.7" y="219.2" width="1" height="1" fill="#54698a"/><rect x="139.1" y="220.7" width="1" height="1" fill="#20324f"/><rect x="114.9" y="224.5" width="1" height="1" fill="#6a7f9c"/><rect x="121.9" y="226.6" width="1" height="1" fill="#6a7f9c"/><rect x="118.5" y="229.1" width="1" height="1" fill="#54698a"/><rect x="144.4" y="230.1" width="1" height="1" fill="#1d2f4a"/><rect x="153.8" y="226.1" width="1" height="1" fill="#1d2f4a"/><rect x="182.8" y="221.5" width="1" height="1" fill="#8696ad"/><rect x="111.6" y="231.5" width="1" height="1" fill="#20324f"/><rect x="189.7" y="221.8" width="1" height="1" fill="#54698a"/><rect x="186.0" y="220.1" width="1" height="1" fill="#20324f"/><rect x="192.0" y="228.8" width="1" height="1" fill="#8696ad"/><rect x="185.1" y="228.4" width="1" height="1" fill="#6a7f9c"/><rect x="160.1" y="229.7" width="1" height="1" fill="#6a7f9c"/><rect x="118.1" y="230.4" width="1" height="1" fill="#1d2f4a"/><rect x="150.8" y="225.0" width="1" height="1" fill="#20324f"/><rect x="125.9" y="231.0" width="1" height="1" fill="#1d2f4a"/><rect x="112.2" y="224.5" width="1" height="1" fill="#20324f"/><rect x="118.5" y="219.5" width="1" height="1" fill="#1d2f4a"/><rect x="120.5" y="231.2" width="1" height="1" fill="#54698a"/><rect x="187.5" y="213.6" width="1" height="1" fill="#54698a"/><rect x="182.0" y="226.8" width="1" height="1" fill="#6a7f9c"/><rect x="169.9" y="230.0" width="1" height="1" fill="#8696ad"/><rect x="193.8" y="217.7" width="1" height="1" fill="#6a7f9c"/><rect x="182.2" y="223.1" width="1" height="1" fill="#1d2f4a"/><rect x="151.3" y="229.1" width="1" height="1" fill="#54698a"/><rect x="147.9" y="228.9" width="1" height="1" fill="#20324f"/><rect x="170.2" y="221.4" width="1" height="1" fill="#8696ad"/><rect x="147.1" y="221.3" width="1" height="1" fill="#20324f"/><rect x="121.2" y="223.6" width="1" height="1" fill="#1d2f4a"/><rect x="158.7" y="224.6" width="1" height="1" fill="#6a7f9c"/><rect x="120.8" y="227.0" width="1" height="1" fill="#20324f"/><rect x="110.9" y="223.3" width="1" height="1" fill="#20324f"/><rect x="111.8" y="229.4" width="1" height="1" fill="#1d2f4a"/><rect x="143.3" y="222.1" width="1" height="1" fill="#6a7f9c"/><rect x="129.5" y="221.9" width="1" height="1" fill="#1d2f4a"/><rect x="123.0" y="227.3" width="1" height="1" fill="#8696ad"/><rect x="186.6" y="226.7" width="1" height="1" fill="#8696ad"/><rect x="162.5" y="220.9" width="1" height="1" fill="#6a7f9c"/><rect x="113.8" y="223.0" width="1" height="1" fill="#6a7f9c"/><rect x="127" y="219" width="1" height="12" fill="#c8d0dc"/><rect x="151" y="219" width="1" height="12" fill="#c8d0dc"/><rect x="175" y="219" width="1" height="12" fill="#c8d0dc"/>
<path d="M115 236 V226 H188 V213" fill="none" stroke="#c9b46a" stroke-width="0.8" stroke-dasharray="1.2 1"/>
<path d="M112 236 V222.5 H184.5 V213" fill="none" stroke="#b8c4d8" stroke-width="0.8" stroke-dasharray="1.2 1"/>
<path d="M108 247 C140 246.5, 180 247, 215 246 C230 245.5, 240 245.5, 250 246 L250 247.5 C235 248, 220 248.5, 200 249.5 C170 250.5, 140 251, 108 250.5 Z" fill="#111"/><rect x="145.9" y="246.6" width="0.9" height="1" fill="#1a1a1a"/><rect x="204.1" y="245.8" width="0.9" height="1" fill="#1a1a1a"/><rect x="167.4" y="246.6" width="1.5" height="1" fill="#1a1a1a"/><rect x="136.2" y="249.6" width="1.8" height="1" fill="#1a1a1a"/><rect x="218.9" y="245.3" width="1.5" height="1" fill="#1a1a1a"/><rect x="222.2" y="245.3" width="1.0" height="1" fill="#1a1a1a"/><rect x="157.0" y="246.3" width="1.8" height="1" fill="#1a1a1a"/><rect x="187.8" y="245.8" width="1.9" height="1" fill="#1a1a1a"/><rect x="151.6" y="246.4" width="1.9" height="1" fill="#1a1a1a"/><rect x="166.1" y="249.9" width="1.6" height="1" fill="#1a1a1a"/><rect x="216.0" y="248.6" width="2.2" height="1" fill="#1a1a1a"/><rect x="189.8" y="246.3" width="1.3" height="1" fill="#1a1a1a"/><rect x="165.9" y="249.8" width="1.3" height="1" fill="#1a1a1a"/><rect x="222.7" y="245.3" width="1.1" height="1" fill="#1a1a1a"/><rect x="148.0" y="249.8" width="2.4" height="1" fill="#1a1a1a"/><rect x="117.1" y="250.2" width="1.4" height="1" fill="#1a1a1a"/><rect x="166.1" y="249.2" width="1.0" height="1" fill="#1a1a1a"/><rect x="139.6" y="247.1" width="2.0" height="1" fill="#1a1a1a"/><rect x="183.7" y="249.1" width="1.5" height="1" fill="#1a1a1a"/><rect x="186.2" y="245.5" width="1.4" height="1" fill="#1a1a1a"/><rect x="179.5" y="249.0" width="2.1" height="1" fill="#1a1a1a"/><rect x="123.1" y="247.0" width="2.4" height="1" fill="#1a1a1a"/><rect x="166.1" y="246.3" width="1.7" height="1" fill="#1a1a1a"/><rect x="211.4" y="249.3" width="1.3" height="1" fill="#1a1a1a"/><rect x="156.6" y="249.9" width="1.4" height="1" fill="#1a1a1a"/><rect x="135.0" y="247.0" width="1.2" height="1" fill="#1a1a1a"/><rect x="135.3" y="250.4" width="1.1" height="1" fill="#1a1a1a"/><rect x="141.0" y="246.7" width="1.4" height="1" fill="#1a1a1a"/><rect x="174.3" y="245.9" width="1.7" height="1" fill="#1a1a1a"/><rect x="180.3" y="246.0" width="2.3" height="1" fill="#1a1a1a"/><rect x="219.4" y="248.7" width="1.5" height="1" fill="#1a1a1a"/><rect x="164.3" y="249.2" width="0.9" height="1" fill="#1a1a1a"/><rect x="132.4" y="247.1" width="1.8" height="1" fill="#1a1a1a"/><rect x="120.0" y="246.9" width="2.4" height="1" fill="#1a1a1a"/><rect x="179.8" y="245.6" width="1.8" height="1" fill="#1a1a1a"/><rect x="125.4" y="250.7" width="1.8" height="1" fill="#1a1a1a"/><rect x="163.5" y="245.9" width="2.5" height="1" fill="#1a1a1a"/><rect x="162.5" y="249.5" width="1.0" height="1" fill="#1a1a1a"/><rect x="195.7" y="249.1" width="2.0" height="1" fill="#1a1a1a"/><rect x="168.4" y="245.7" width="1.7" height="1" fill="#1a1a1a"/><rect x="125.2" y="246.6" width="1.3" height="1" fill="#1a1a1a"/><rect x="183.2" y="245.7" width="1.2" height="1" fill="#1a1a1a"/><rect x="150.9" y="246.6" width="1.2" height="1" fill="#1a1a1a"/><rect x="171.4" y="249.7" width="1.8" height="1" fill="#1a1a1a"/><rect x="200.2" y="245.4" width="2.2" height="1" fill="#1a1a1a"/><rect x="194.6" y="246.1" width="1.6" height="1" fill="#1a1a1a"/><rect x="193.5" y="245.5" width="1.6" height="1" fill="#1a1a1a"/><rect x="130.7" y="250.1" width="2.4" height="1" fill="#1a1a1a"/><rect x="223.6" y="248.3" width="1.0" height="1" fill="#1a1a1a"/><rect x="163.0" y="249.4" width="1.9" height="1" fill="#1a1a1a"/><rect x="213.3" y="245.5" width="1.9" height="1" fill="#1a1a1a"/><rect x="201.6" y="245.3" width="1.0" height="1" fill="#1a1a1a"/><rect x="153.5" y="246.4" width="1.1" height="1" fill="#1a1a1a"/><rect x="200.3" y="248.7" width="2.4" height="1" fill="#1a1a1a"/><rect x="192.5" y="249.1" width="2.4" height="1" fill="#1a1a1a"/><rect x="192.8" y="245.3" width="0.8" height="1" fill="#1a1a1a"/><rect x="177.1" y="249.7" width="1.0" height="1" fill="#1a1a1a"/><rect x="204.7" y="249.2" width="1.4" height="1" fill="#1a1a1a"/><rect x="172.2" y="246.6" width="2.2" height="1" fill="#1a1a1a"/><rect x="193.0" y="245.8" width="2.4" height="1" fill="#1a1a1a"/><rect x="158.8" y="246.0" width="1.2" height="1" fill="#1a1a1a"/><rect x="137.5" y="250.0" width="2.1" height="1" fill="#1a1a1a"/><rect x="146.1" y="250.2" width="0.9" height="1" fill="#1a1a1a"/><rect x="194.6" y="249.3" width="2.2" height="1" fill="#1a1a1a"/><rect x="168.5" y="246.1" width="1.7" height="1" fill="#1a1a1a"/><rect x="110.2" y="250.7" width="1.8" height="1" fill="#1a1a1a"/><rect x="198.8" y="246.0" width="1.6" height="1" fill="#1a1a1a"/><rect x="192.8" y="246.0" width="1.7" height="1" fill="#1a1a1a"/><rect x="173.0" y="245.7" width="0.9" height="1" fill="#1a1a1a"/><rect x="130.4" y="246.5" width="1.7" height="1" fill="#1a1a1a"/><rect x="233.1" y="247.4" width="1.9" height="1" fill="#444"/><rect x="221.3" y="247.9" width="1.5" height="1" fill="#222"/><rect x="239.6" y="246.6" width="1.4" height="1" fill="#444"/><rect x="230.4" y="246.1" width="1.4" height="1" fill="#444"/><rect x="251.1" y="247.7" width="1.0" height="1" fill="#444"/><rect x="211.9" y="245.8" width="1.3" height="1" fill="#222"/><rect x="238.6" y="246.6" width="1.1" height="1" fill="#444"/><rect x="244.2" y="247.7" width="1.0" height="1" fill="#666"/><rect x="237.2" y="246.4" width="1.1" height="1" fill="#222"/><rect x="253.4" y="246.0" width="1.9" height="1" fill="#444"/><rect x="249.2" y="245.9" width="1.6" height="1" fill="#222"/><rect x="213.1" y="246.6" width="1.4" height="1" fill="#444"/><rect x="226.1" y="246.4" width="0.9" height="1" fill="#444"/><rect x="206.0" y="246.9" width="1.3" height="1" fill="#222"/><rect x="224.2" y="246.8" width="1.2" height="1" fill="#222"/><rect x="210.6" y="247.8" width="1.1" height="1" fill="#222"/><rect x="209.2" y="246.2" width="1.9" height="1" fill="#222"/><rect x="218.5" y="245.8" width="1.3" height="1" fill="#666"/><rect x="245.9" y="246.1" width="1.0" height="1" fill="#666"/><rect x="233.5" y="247.3" width="0.9" height="1" fill="#222"/><rect x="245.0" y="246.0" width="1.9" height="1" fill="#444"/><rect x="251.9" y="247.1" width="1.8" height="1" fill="#222"/><rect x="235.4" y="246.1" width="1.1" height="1" fill="#222"/><rect x="227.7" y="246.3" width="1.5" height="1" fill="#444"/><rect x="236.1" y="245.6" width="1.7" height="1" fill="#222"/><rect x="253.5" y="246.2" width="1.0" height="1" fill="#444"/><rect x="236.4" y="246.8" width="1.0" height="1" fill="#444"/><rect x="230.0" y="245.9" width="1.2" height="1" fill="#222"/><rect x="254.7" y="245.6" width="0.8" height="1" fill="#666"/><rect x="232.6" y="246.0" width="1.4" height="1" fill="#444"/><rect x="210.3" y="247.5" width="1.3" height="1" fill="#444"/><rect x="232.3" y="247.7" width="2.0" height="1" fill="#444"/><rect x="239.4" y="248.0" width="1.2" height="1" fill="#666"/><rect x="241.4" y="245.8" width="2.0" height="1" fill="#222"/><rect x="246.8" y="245.5" width="1.6" height="1" fill="#444"/><rect x="226.5" y="245.6" width="1.6" height="1" fill="#444"/><rect x="248.5" y="247.2" width="1.1" height="1" fill="#222"/><rect x="239.6" y="245.6" width="1.0" height="1" fill="#444"/><rect x="227.3" y="246.2" width="2.0" height="1" fill="#666"/><rect x="221.2" y="245.6" width="1.9" height="1" fill="#222"/><rect x="227.5" y="245.8" width="1.3" height="1" fill="#e5e5e5"/><rect x="231.6" y="246.9" width="1.0" height="1" fill="#e5e5e5"/><rect x="232.7" y="245.8" width="1.1" height="1" fill="#e5e5e5"/><rect x="218.1" y="246.7" width="0.9" height="1" fill="#e5e5e5"/><rect x="215.8" y="246.5" width="1.1" height="1" fill="#e5e5e5"/><rect x="235.5" y="247.0" width="1.7" height="1" fill="#e5e5e5"/><rect x="238.0" y="247.4" width="1.9" height="1" fill="#e5e5e5"/><rect x="228.6" y="246.5" width="2.0" height="1" fill="#e5e5e5"/><rect x="220.2" y="247.4" width="1.6" height="1" fill="#e5e5e5"/><rect x="216.5" y="247.6" width="1.9" height="1" fill="#e5e5e5"/><rect x="237.0" y="247.4" width="1.8" height="1" fill="#e5e5e5"/><rect x="219.9" y="247.0" width="1.4" height="1" fill="#e5e5e5"/><rect x="244.2" y="247.6" width="1.8" height="1" fill="#e5e5e5"/><rect x="235.4" y="247.8" width="1.6" height="1" fill="#e5e5e5"/><rect x="239.3" y="246.3" width="0.8" height="1" fill="#e5e5e5"/><rect x="219.7" y="246.6" width="0.9" height="1" fill="#e5e5e5"/><rect x="244.3" y="247.0" width="1.6" height="1" fill="#e5e5e5"/><rect x="236.9" y="247.3" width="1.4" height="1" fill="#e5e5e5"/><rect x="215.1" y="247.6" width="1.7" height="1" fill="#e5e5e5"/><rect x="232.6" y="247.0" width="1.6" height="1" fill="#e5e5e5"/><rect x="217.3" y="247.4" width="1.1" height="1" fill="#e5e5e5"/><rect x="217.6" y="246.4" width="1.7" height="1" fill="#e5e5e5"/><rect x="222.2" y="247.4" width="2.0" height="1" fill="#e5e5e5"/><rect x="232.3" y="246.6" width="1.4" height="1" fill="#e5e5e5"/><rect x="238.9" y="247.5" width="1.5" height="1" fill="#e5e5e5"/><path d="M108 270.6 H255" stroke="#a87a40" stroke-width="0.9"/>
<path d="M107 270.5 L111 269 L111 272 Z M256 270.5 L252 269 L252 272 Z" fill="#b07a3a"/>
<path d="M137 268.6 H227" stroke="#f3c49c" stroke-width="1.5"/>
<path d="M127 272 H236" stroke="#e8803a" stroke-width="1.1"/>
<ellipse cx="120.5" cy="276" rx="7.3" ry="2.7" transform="rotate(-30 120.5 276)" fill="none" stroke="#e8803a" stroke-width="1.1"/>
<path d="M121 267 q5 1 6 5" fill="none" stroke="#e8803a" stroke-width="1"/><path d="M119 266.5 L124 265.5 L122 269 Z" fill="#e8803a"/>
<ellipse cx="242.5" cy="276" rx="7.3" ry="2.7" transform="rotate(30 242.5 276)" fill="none" stroke="#e8803a" stroke-width="1.1"/>
<path d="M242 267 q-5 1 -6 5" fill="none" stroke="#e8803a" stroke-width="1"/><path d="M244 266.5 L239 265.5 L241 269 Z" fill="#e8803a"/>
<rect x="108" y="288" width="148" height="2" fill="#9c9c9c"/><rect x="108" y="292" width="148" height="2" fill="#9c9c9c"/><rect x="108" y="296" width="148" height="2" fill="#9c9c9c"/><rect x="108" y="300" width="148" height="2" fill="#9c9c9c"/><rect x="108" y="304" width="148" height="2" fill="#9c9c9c"/>
<rect x="108" y="312.5" width="148" height="2" fill="#9c9c9c"/><rect x="108" y="316.5" width="148" height="2" fill="#9c9c9c"/><rect x="108" y="320.5" width="148" height="2" fill="#9c9c9c"/><rect x="108" y="324.5" width="148" height="2" fill="#9c9c9c"/><rect x="108" y="328.5" width="148" height="2" fill="#9c9c9c"/>
<rect x="107.5" y="336.6" width="148.5" height="3" fill="#8a6a2a"/><rect x="109" y="336.8" width="144" height="2.6" fill="#f39c00"/><rect x="107.5" y="341.6" width="148.5" height="3" fill="#8a6a2a"/><rect x="109" y="341.8" width="144" height="2.6" fill="#f39c00"/><rect x="107.5" y="346.6" width="148.5" height="3" fill="#8a6a2a"/><rect x="109" y="346.8" width="144" height="2.6" fill="#f39c00"/><rect x="107.5" y="351.6" width="148.5" height="3" fill="#8a6a2a"/><rect x="109" y="351.8" width="144" height="2.6" fill="#f39c00"/>
<rect x="261" y="152" width="9" height="21" fill="#2e2e2e"/><path d="M262 160 L265.5 155.5 L269 160 Z" fill="#d8d8d8"/>
<rect x="261" y="344" width="9" height="13" fill="#2e2e2e"/>
<path d="M262 349 L269 349 L265.5 354 Z" fill="#d8d8d8"/>
<path d="M106 369 V361 M108.5 369 V361 M111 369 V362 L114 369" fill="none" stroke="#c8c8c8" stroke-width="1.3"/>
<path d="M115.5 368 L119.5 368 L117.5 370 Z" fill="#c8c8c8"/>
<path d="M125.5 369.5 V361.5 H129 L130 363 H136.5 V369.5 Z" fill="none" stroke="#c8c8c8" stroke-width="1"/>
<circle cx="133" cy="366.5" r="2.2" fill="none" stroke="#c8c8c8" stroke-width="1"/>
<path d="M190 361 L197 369 M197 361 L190 369" stroke="#6a6a6a" stroke-width="1.2"/>
<rect x="207.5" y="361.5" width="7" height="8" fill="none" stroke="#6a6a6a"/>
<path d="M227 362 H235 V370 H230 L227 367 Z" fill="#d0d0d0"/><path d="M227 367 L230 367 L230 370" fill="none" stroke="#666" stroke-width="0.8"/>
<path d="M245.5 363.5 H254 M248 363.5 V362 H251.5 V363.5 M246.5 364 L247.3 370 H252.3 L253 364" fill="none" stroke="#626262" stroke-width="1"/>
<path d="M273 363 L273 371 L265 371 Z" fill="#3e3e3e"/><path d="M272 364.5 L266.5 370 M272 367.5 L269.5 370" stroke="#6a6a6a" stroke-width="0.8"/>
<g fill="#1e1e1e"><rect x="180" y="375" width="2" height="1.5"/><rect x="183" y="375" width="2" height="1.5"/><rect x="186" y="375" width="2" height="1.5"/><rect x="189" y="375" width="2" height="1.5"/></g>
<rect x="99" y="335" width="152" height="38" fill="none" stroke="#f53434" stroke-width="2.2"/>
<path d="M267.8 268.6 L269.2 269.6 L240.5 331 L236 328.5 Z" fill="#f03a3a"/><path d="M232.5 340 L230.5 325 L243.5 332.5 Z" fill="#f03a3a"/>
</svg>
</body></html>
